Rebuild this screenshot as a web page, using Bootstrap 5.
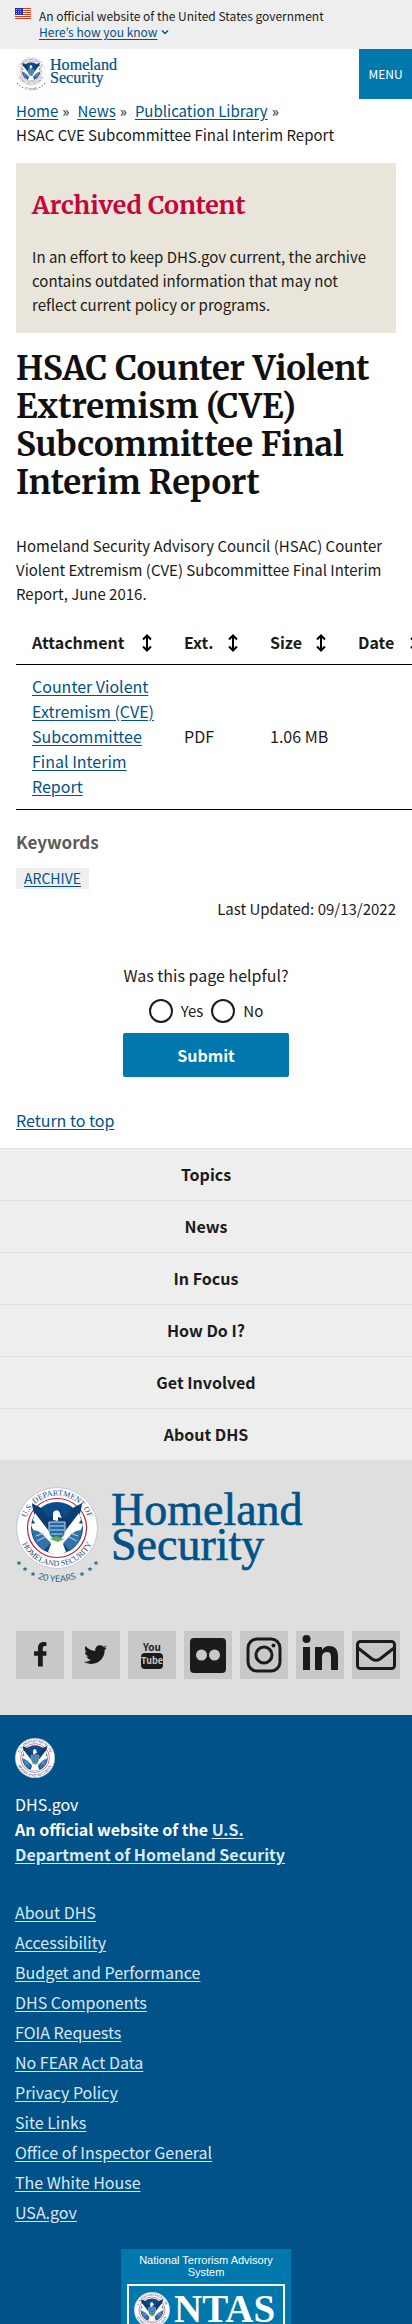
<!DOCTYPE html>
<html lang="en">
<head>
<meta charset="utf-8">
<meta name="viewport" content="width=device-width, initial-scale=1">
<title>HSAC CVE Subcommittee Final Interim Report | Homeland Security</title>
<link href="https://cdn.jsdelivr.net/npm/bootstrap@5.3.0/dist/css/bootstrap.min.css" rel="stylesheet">
<style>
  :root { --dhs-blue: #005288; --dhs-bright: #0078ae; --ui: "Source Sans Pro", "Noto Sans CJK KR", sans-serif; --heading: Merriweather, "DejaVu Serif", serif; }
  body { font-family: var(--ui); font-size: 16px; line-height: 24px; color: #1b1b1b; background: #fff; overflow-x: hidden; }
  a { color: var(--dhs-blue); text-underline-offset: 2px; }
  .gov-banner { background: #eee; font-size: 12px; line-height: 16px; padding: 8px 15px 9px; }
  .gov-banner .btn { font-size: 12px; line-height: 16px; color: var(--dhs-blue); text-underline-offset: 2px; }
  .site-head { height: 50px; }
  .site-head .btn { width: 53px; font-size: 12px; background: var(--dhs-bright); color: #fff; }
  .crumbs, .body-copy { font-size: 15px; }
  .crumbs a { margin-right: 4px; }
  .archived { background: #e9e5da; padding: 24px 16px 16px; margin-bottom: 17px; }
  .archived h2 { font: 700 25px/36px var(--heading); color: #c3073b; margin-bottom: 22px; }
  h1 { font: 700 33px/38px var(--heading); color: #111; }
  .file-table { width: 480px; table-layout: fixed; line-height: 25px; --bs-table-color: #1b1b1b; }
  .file-table th, .file-table td { padding: 8px 16px 9px; border-bottom: 1px solid #000; }
  .file-table td { padding: 9px 8px 10px 16px; }
  .file-table .name-col { width: 152px; } .file-table .ext-col { width: 86px; } .file-table .size-col { width: 88px; }
  .table-bleed { margin-right: -16px; overflow: hidden; }
  .keywords { font-size: 17px; line-height: 24px; color: #5b5b5b; font-weight: 700; margin: 20px 0 14px; }
  .keyword-tag { background: #eee; font-size: 14px; line-height: 21px; padding: 0 8px; }
  .feedback { margin-top: 42px; }
  .feedback legend { font-size: 16px; line-height: 24px; margin-bottom: 12px; }
  .feedback .form-check-input { width: 24px; height: 24px; border: 2px solid #1b1b1b; }
  .feedback .submit { width: 166px; height: 44px; margin: 10px auto 0; border-radius: 2px; background: var(--dhs-bright); color: #fff; font-weight: 700; font-size: 16px; }
  .to-top { padding: 31px 0 16px; }
  .foot-nav a { display: block; background: #eee; border-top: 1px solid #dfdfdf; color: #1b1b1b; font-weight: 700; line-height: 51px; text-align: center; text-decoration: none; }
  .foot-mid { background: #dfdfdf; padding: 27px 12px 36px 16px; }
  .foot-mid .social { margin-top: 47px; }
  .social a { width: 48px; height: 48px; background: #c8c8c8; color: #1b1b1b; }
  .foot-id { background: var(--dhs-blue); color: #fff; padding: 23px 15px 0; }
  .foot-id a { color: #d9e8f6; }
  .foot-id .ident { line-height: 25px; margin: 14px 0 30px; }
  .foot-id ul { margin-bottom: 22px; }
  .foot-id li { line-height: 30px; }
  .ntas { width: 170px; height: 75px; overflow: hidden; background: var(--dhs-bright); font: 11px/12px "Liberation Sans", Arial, sans-serif; padding: 5px 6px 0; color: #fff; }
  .ntas-title { padding: 0 8px 6px; }
  .ntas-box { border: 2px solid #fff; }
</style>
</head>
<body>
<svg width="0" height="0" class="position-absolute" aria-hidden="true">
  <defs>
    <path id="arcTop" d="M8.500 41a32.500 32.500 0 0 1 65 0"/>
    <path id="arcBottom" d="M3 41a38 38 0 0 0 76 0"/>
    <path id="arcYears" d="M-13 41a54 54 0 0 0 108 0"/>
    <path id="star" d="M0-2.500L.7-.8 2.500-.8 1.100.4 1.600 2.200 0 1.100-1.600 2.200-1.100.4-2.500-.8-.7-.8z"/>
    <path id="sort" d="M5 2v14M1 5.500l4-4 4 4M1 12.500l4 4 4-4" fill="none" stroke="#000" stroke-width="2"/>
    <symbol id="seal" viewBox="0 0 82 82">
      <circle cx="41" cy="41" r="40.500" fill="#fff" stroke="#c5c8cf"/>
      <g fill="#12467c" font-family="Liberation Serif, serif" font-size="8" text-anchor="middle">
        <text><textPath href="#arcTop" startOffset="50%">U.S. DEPARTMENT OF</textPath></text>
        <text><textPath href="#arcBottom" startOffset="50%">HOMELAND SECURITY</textPath></text>
      </g>
      <circle cx="41" cy="41" r="29.500" fill="none" stroke="#c2203c" stroke-width="1.200"/>
      <circle cx="41" cy="41" r="26" fill="#0b4c8a"/>
      <path d="M15 37c6-2 12 0 18 8l8-3 8 3c6-8 12-10 18-8-1 6-6 14-14 16l-6 4 3 8c-6 3-12 3-18 0l3-8-6-4c-8-2-13-10-14-16z" fill="#fff"/>
      <path d="M16 43c7 0 11 4 15 9l4 4-7 7c-7-4-11-11-12-20zM66 43c-7 0-11 4-15 9l-4 4 7 7c7-4 11-11 12-20z" fill="#3471a8"/>
      <path d="M16 16c4 3 8 3 11 7l6 9v12c-9-2-12-8-14-14-1-5-3-9-3-14zM66 16c-4 3-8 3-11 7l-6 9v12c9-2 12-8 14-14 1-5 3-9 3-14z" fill="#0b3d70"/>
      <path d="M19 26l13 17 1 4-10-5-6-9zM63 26L50 43l-1 4 10-5 6-9z" fill="#fff"/>
      <path d="M32 30c4-1 5-1 6-6 1-2 3-2 4-1 3 0 3 3 3 4 1 2 3 3 6 3l-4 7H35z" fill="#0b3d70"/>
      <path d="M37 27c0-5 7-5 7 0l2 4-4-1v4l-5-1z" fill="#fff"/>
      <path d="M33 35h16v10c0 5-5 7-8 8-3-1-8-3-8-8z" fill="#246aa5" stroke="#fff" stroke-width=".8"/>
      <path d="M34 39h14M34 43h14M35 47h12" stroke="#b9d6ec" stroke-width="1"/>
      <path d="M34 52l6-3 8 3-6 3z" fill="#6daa45"/>
      <path d="M20 49l8-3M21 54l8-4M62 49l-8-3M61 54l-8-4" stroke="#c1dced" stroke-width="1"/>
    </symbol>
    <symbol id="wordmark" viewBox="0 0 290 97">
      <use href="#seal" width="82" height="82"/>
      <g fill="#2d6580">
        <use href="#star" x="3" y="76"/><use href="#star" x="9" y="82"/><use href="#star" x="17" y="87"/>
        <use href="#star" x="66" y="87"/><use href="#star" x="74" y="82"/><use href="#star" x="80" y="76"/>
        <text font-family="Lato, sans-serif" font-size="9" text-anchor="middle"><textPath href="#arcYears" startOffset="50%">20 YEARS</textPath></text>
      </g>
      <g fill="#005288" stroke="#005288" stroke-width=".6" font-family="Liberation Serif, serif" font-size="46">
        <text x="95" y="38">Homeland</text><text x="95" y="73">Security</text>
      </g>
    </symbol>
  </defs>
</svg>

<section class="gov-banner d-flex" id="top">
  <svg class="flex-shrink-0" width="16" height="11" viewBox="0 0 16 11" aria-hidden="true">
    <path fill="#fff" d="M0 0h16v11H0z"/><path stroke="#db3e1f" d="M0 .5h16M0 2.500h16M0 4.500h16M0 6.500h16M0 8.500h16M0 10.500h16"/>
    <path fill="#1e33b1" d="M0 0h8v7H0z"/><path stroke="#fff" stroke-dasharray="1 1" stroke-width=".6" d="M1 1.500h6M1 3.500h6M1 5.500h6"/>
  </svg>
  <div class="ms-2">
    <div>An official website of the United States government</div>
    <button type="button" class="btn btn-link border-0 p-0 d-flex align-items-center gap-1">Here’s how you know
      <svg width="8" height="6" viewBox="0 0 8 6" aria-hidden="true"><path d="M1 1.500l3 3 3-3" fill="none" stroke="currentColor" stroke-width="1.500"/></svg></button>
  </div>
</section>

<header class="site-head d-flex justify-content-between">
  <a href="#" class="ps-3 pt-2" aria-label="Homeland Security"><svg class="d-block" width="103" height="34"><use href="#wordmark"/></svg></a>
  <button type="button" class="btn rounded-0 border-0 p-0">MENU</button>
</header>

<main class="px-3">
  <nav aria-label="Breadcrumb">
    <ol class="crumbs list-unstyled d-flex flex-wrap mb-0">
      <li class="me-2"><a href="#">Home</a>»</li>
      <li class="me-2"><a href="#">News</a>»</li>
      <li class="me-2"><a href="#">Publication Library</a>»</li>
      <li>HSAC CVE Subcommittee Final Interim Report</li>
    </ol>
  </nav>
  <section class="archived mt-3">
    <h2>Archived Content</h2>
    <p class="body-copy mb-0">In an effort to keep DHS.gov current, the archive contains outdated information that may not reflect current policy or programs.</p>
  </section>
  <h1 class="mb-4">HSAC Counter Violent Extremism (CVE) Subcommittee Final Interim Report</h1>
  <p class="body-copy pt-2 mb-3">Homeland Security Advisory Council (HSAC) Counter Violent Extremism (CVE) Subcommittee Final Interim Report, June 2016.</p>
  <div class="table-bleed">
    <table class="file-table table mb-0 align-middle">
      <thead><tr>
        <th class="name-col"><span class="d-flex align-items-center justify-content-between">Attachment <svg width="10" height="18" viewBox="0 0 10 18"><use href="#sort"/></svg></span></th>
        <th class="ext-col"><span class="d-flex align-items-center justify-content-between">Ext. <svg width="10" height="18" viewBox="0 0 10 18"><use href="#sort"/></svg></span></th>
        <th class="size-col"><span class="d-flex align-items-center justify-content-between">Size <svg width="10" height="18" viewBox="0 0 10 18"><use href="#sort"/></svg></span></th>
        <th><span class="d-flex align-items-center gap-3">Date <svg width="10" height="18" viewBox="0 0 10 18"><use href="#sort"/></svg></span></th>
      </tr></thead>
      <tbody><tr>
        <td><a href="#">Counter Violent Extremism (CVE) Subcommittee Final Interim Report</a></td><td>PDF</td><td>1.06 MB</td><td></td>
      </tr></tbody>
    </table>
  </div>
  <h2 class="keywords">Keywords</h2>
  <div class="d-flex"><a href="#" class="keyword-tag text-uppercase">Archive</a></div>
  <div class="body-copy text-end mt-2">Last Updated: 09/13/2022</div>
  <form class="feedback text-center">
    <fieldset>
      <legend>Was this page helpful?</legend>
      <div class="body-copy d-flex justify-content-center gap-2">
        <input class="form-check-input m-0" type="radio" name="helpful" id="yes"><label for="yes">Yes</label>
        <input class="form-check-input m-0" type="radio" name="helpful" id="no"><label for="no">No</label>
      </div>
    </fieldset>
    <button type="button" class="submit btn d-block border-0 p-0">Submit</button>
  </form>
  <div class="to-top"><a href="#top">Return to top</a></div>
</main>

<footer>
  <nav class="foot-nav" aria-label="Footer">
    <a href="#">Topics</a><a href="#">News</a><a href="#">In Focus</a><a href="#">How Do I?</a><a href="#">Get Involved</a><a href="#">About DHS</a>
  </nav>
  <section class="foot-mid">
    <svg class="d-block" width="290" height="97" role="img" aria-label="Homeland Security"><use href="#wordmark"/></svg>
    <div class="social d-flex gap-2">
      <a href="#" aria-label="Facebook"><svg class="d-block" width="48" height="48" viewBox="0 0 48 48"><path transform="translate(17 11) scale(.048)" fill="currentColor" d="M279 288V195h-75v-60c0-35 12-50 52-50h24V6S260 0 225 0c-73 0-121 44-121 125v70H22v93h82v224h100V288z"/></svg></a>
      <a href="#" aria-label="Twitter"><svg class="d-block" width="48" height="48" viewBox="0 0 48 48"><path transform="translate(12 12) scale(.045)" fill="currentColor" d="M459.370 151.716c.325 4.548.325 9.097.325 13.645 0 138.720-105.583 298.558-298.558 298.558-59.452 0-114.680-17.219-161.137-47.106 8.447.974 16.568 1.299 25.340 1.299 49.055 0 94.213-16.568 130.274-44.832-46.132-.975-84.792-31.188-98.112-72.772 6.498.974 12.995 1.624 19.818 1.624 9.421 0 18.843-1.300 27.614-3.573-48.081-9.747-84.143-51.980-84.143-102.985v-1.299c13.969 7.797 30.214 12.670 47.431 13.319-28.264-18.843-46.781-51.005-46.781-87.391 0-19.492 5.197-37.360 14.294-52.954 51.655 63.675 129.300 105.258 216.365 109.807-1.624-7.797-2.599-15.918-2.599-24.040 0-57.828 46.782-104.934 104.934-104.934 30.213 0 57.502 12.670 76.670 33.137 23.715-4.548 46.456-13.320 66.599-25.340-7.798 24.366-24.366 44.833-46.132 57.827 21.117-2.273 41.584-8.122 60.426-16.243-14.292 20.791-32.161 39.308-52.628 54.253z"/></svg></a>
      <a href="#" aria-label="YouTube"><svg class="d-block" width="48" height="48" viewBox="0 0 48 48" font-family="Liberation Sans Narrow, Noto Sans CJK KR, sans-serif" font-weight="700" text-anchor="middle"><rect x="13" y="22" width="22" height="16" rx="4" fill="currentColor"/><text x="24" y="20" font-size="10" fill="currentColor">You</text><text x="24" y="33" font-size="9" fill="#c8c8c8">Tube</text></svg></a>
      <a href="#" aria-label="Flickr"><svg class="d-block" width="48" height="48" viewBox="0 0 48 48"><rect x="6" y="7" width="36" height="35" rx="4" fill="currentColor"/><circle cx="17.500" cy="24" r="5.500" fill="#c8c8c8"/><circle cx="30.500" cy="24" r="5.500" fill="#c8c8c8"/></svg></a>
      <a href="#" aria-label="Instagram"><svg class="d-block" width="48" height="48" viewBox="0 0 48 48" fill="none" stroke="currentColor" stroke-width="3"><rect x="8" y="8" width="32" height="32" rx="9"/><circle cx="24" cy="24" r="8"/><circle cx="33.500" cy="14.500" r="2" fill="currentColor" stroke="none"/></svg></a>
      <a href="#" aria-label="LinkedIn"><svg class="d-block" width="48" height="48" viewBox="0 0 48 48" fill="currentColor"><circle cx="10.500" cy="8" r="4"/><path d="M7 16h7v23H7zM19 16h7v3c1-2 4-4 7-4 7 0 9 4 9 11v13h-7V27c0-3 0-6-4-6s-5 3-5 6v12h-7z"/></svg></a>
      <a href="#" aria-label="Email"><svg class="d-block" width="48" height="48" viewBox="0 0 48 48" fill="none" stroke="currentColor" stroke-width="3"><rect x="5.500" y="10.500" width="37" height="27" rx="3"/><path d="M6 17l14 11c3 2 5 2 8 0l14-11"/></svg></a>
    </div>
  </section>
  <section class="foot-id">
    <svg class="d-block" width="40" height="40"><use href="#seal"/></svg>
    <div class="ident">
      <div>DHS.gov</div>
      <div class="fw-bold">An official website of the <a href="#">U.S.<br>Department of Homeland Security</a></div>
    </div>
    <ul class="list-unstyled">
      <li><a href="#">About DHS</a></li>
      <li><a href="#">Accessibility</a></li>
      <li><a href="#">Budget and Performance</a></li>
      <li><a href="#">DHS Components</a></li>
      <li><a href="#">FOIA Requests</a></li>
      <li><a href="#">No FEAR Act Data</a></li>
      <li><a href="#">Privacy Policy</a></li>
      <li><a href="#">Site Links</a></li>
      <li><a href="#">Office of Inspector General</a></li>
      <li><a href="#">The White House</a></li>
      <li><a href="#">USA.gov</a></li>
    </ul>
    <div class="ntas mx-auto text-center">
      <div class="ntas-title">National Terrorism Advisory System</div>
      <div class="ntas-box"><svg class="d-block" width="154" height="80" viewBox="0 0 154 80"><use href="#seal" x="5" y="6" width="36" height="36"/><text x="45" y="36" text-anchor="start" font-family="Liberation Serif, serif" font-weight="700" font-size="39" fill="#fff">NTAS</text></svg></div>
    </div>
  </section>
</footer>
<script src="https://cdn.jsdelivr.net/npm/bootstrap@5.3.0/dist/js/bootstrap.bundle.min.js"></script>
</body>
</html>
